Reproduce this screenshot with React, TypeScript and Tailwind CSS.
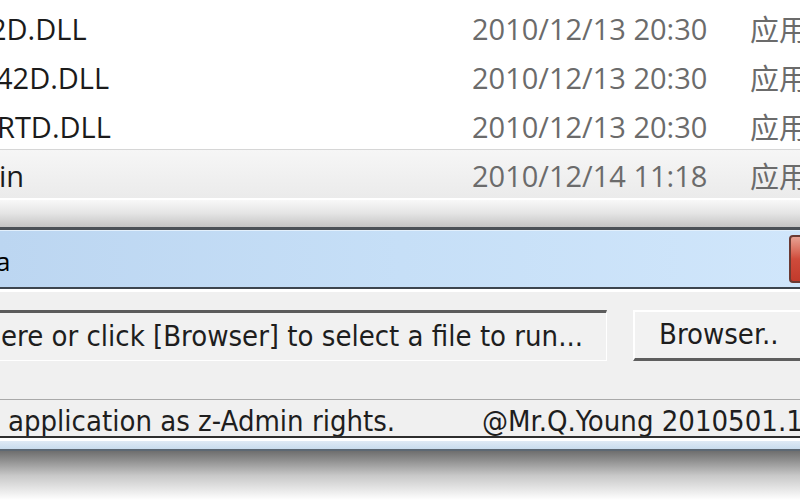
const rows = [
  { name: "2D.DLL", date: "2010/12/13 20:30", shift: "-ml-[10px]" },
  { name: "42D.DLL", date: "2010/12/13 20:30", shift: "-ml-[4px]" },
  { name: "RTD.DLL", date: "2010/12/13 20:30", shift: "-ml-[3px]" },
];

function FileRow({ name, date, shift, selected }: { name: string; date: string; shift: string; selected?: boolean }) {
  return (
    <div
      className={
        selected
          ? "grid grid-cols-[472px_278px_1fr] items-center h-[49px] pt-[3px] border-t border-[#d6d6d6] bg-gradient-to-b from-[#f6f6f6] to-[#ebebeb]"
          : "grid grid-cols-[472px_278px_1fr] items-center h-[49px] pt-[3px]"
      }
    >
      <span className={shift + " text-[#1b1b1b]"}>{name}</span>
      <span className="text-[#6b6b6b]">{date}</span>
      <span className="text-[#6b6b6b] whitespace-nowrap font-['Noto_Sans_CJK_SC',sans-serif]">应用程序扩展</span>
    </div>
  );
}

export default function App() {
  return (
    <div className="w-[800px] h-[500px] overflow-hidden bg-white flex flex-col">
      {/* explorer file list */}
      <div className="pt-[2px] font-['Open_Sans',sans-serif] text-[29px] leading-none">
        {rows.map((r) => (
          <FileRow key={r.name} {...r} />
        ))}
        <FileRow name="in" date="2010/12/14 11:18" shift="-ml-[1px]" selected />
      </div>
      <div className="h-[2px] bg-white" />
      <div className="h-[27px] bg-gradient-to-b from-[#f8f8f8] via-[#e4e4e4] to-[#c4c4c4]" />
      <div className="h-[3px] bg-[#4b5157]" />

      {/* dialog title bar */}
      <div className="h-[57px] flex items-center justify-between bg-gradient-to-r from-[#bcd6f1] via-[#c6dff7] to-[#d0e6fb] border-t border-[#e3f0fc] font-['Open_Sans',sans-serif] text-[26px] text-black">
        <span className="-ml-[4px] pt-[4px]">a</span>
        <div className="w-[30px] h-[48px] mr-[-19px] rounded-[4px] border-2 border-[#6b3a33] bg-gradient-to-b from-[#e7a193] via-[#cf4b3b] to-[#c23a2b]" />
      </div>
      <div className="h-[2px] bg-[#3d454e]" />
      <div className="h-[3px] bg-white" />

      {/* dialog body */}
      <div className="flex-1 flex flex-col bg-[#f0f0f0] font-['DejaVu_Sans_Condensed','DejaVu_Sans',sans-serif] text-[29px] text-[#1e1e1e]">
        <div className="flex items-stretch pt-[18px] h-[69px]">
          <div className="shrink-0 w-[617px] -ml-[10px] flex items-center border-t-[3px] border-l-[3px] border-[#5c5c5c] border-r border-b border-r-white border-b-white bg-[#f1f1f1] whitespace-nowrap overflow-hidden">
            <span className="ml-[8px]">ere or click [Browser] to select a file to run...</span>
          </div>
          <div className="shrink-0 w-[190px] ml-[26px] flex items-center pl-[24px] border-t-2 border-l-2 border-white border-b-[3px] border-b-[#5e5e5e] bg-[#f2f2f2] whitespace-nowrap">
            Browser..
          </div>
        </div>
        <div className="h-[38px]" />
        <div className="h-px bg-[#a9a9a9]" />
        <div className="h-[36px] flex items-center pt-[7px] bg-[#f0f0f0] whitespace-nowrap">
          <span className="ml-[8px] w-[474px] shrink-0">application as z-Admin rights.</span>
          <span>@Mr.Q.Young 2010501.1</span>
        </div>
        <div className="h-[2px] bg-[#2e2e2e]" />
        <div className="h-[3px] bg-white" />
        <div className="h-[8px] bg-gradient-to-b from-[#dfeaf5] to-[#c9dced]" />
        <div className="h-[2px] bg-[#5d6873]" />
        <div className="flex-1 bg-gradient-to-b from-[#6e6e6e] via-[#c8c8c8] to-white" />
      </div>
    </div>
  );
}
